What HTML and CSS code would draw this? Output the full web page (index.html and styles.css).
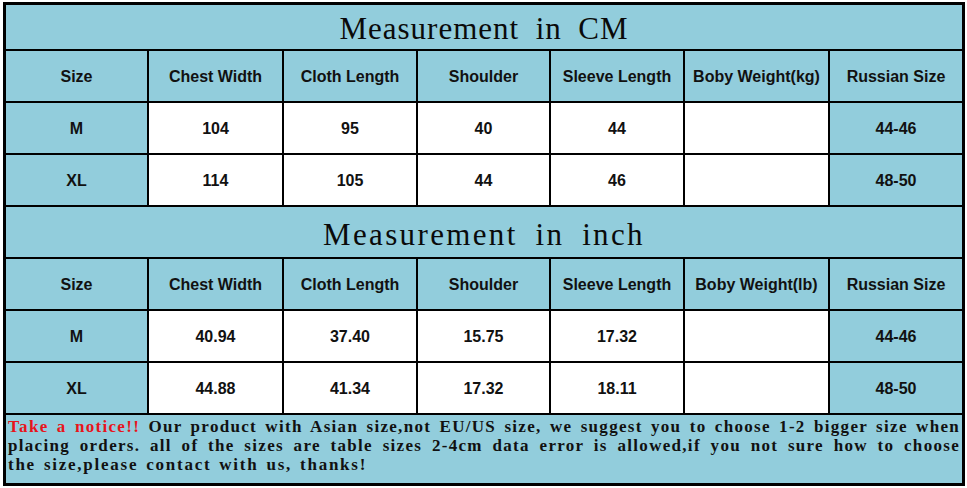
FILE: index.html
```html
<!DOCTYPE html>
<html>
<head>
<meta charset="utf-8">
<link rel="stylesheet" href="styles.css">
</head>
<body>
<div class="chart">
  <div class="title">Measurement in CM</div>

  <div class="c">Size</div>
  <div class="c">Chest Width</div>
  <div class="c">Cloth Length</div>
  <div class="c">Shoulder</div>
  <div class="c">Sleeve Length</div>
  <div class="c">Boby Weight(kg)</div>
  <div class="c">Russian Size</div>

  <div class="c">M</div>
  <div class="c w">104</div>
  <div class="c w">95</div>
  <div class="c w">40</div>
  <div class="c w">44</div>
  <div class="c w"></div>
  <div class="c">44-46</div>

  <div class="c">XL</div>
  <div class="c w">114</div>
  <div class="c w">105</div>
  <div class="c w">44</div>
  <div class="c w">46</div>
  <div class="c w"></div>
  <div class="c">48-50</div>

  <div class="title title-2">Measurement in inch</div>

  <div class="c">Size</div>
  <div class="c">Chest Width</div>
  <div class="c">Cloth Length</div>
  <div class="c">Shoulder</div>
  <div class="c">Sleeve Length</div>
  <div class="c">Boby Weight(lb)</div>
  <div class="c">Russian Size</div>

  <div class="c">M</div>
  <div class="c w">40.94</div>
  <div class="c w">37.40</div>
  <div class="c w">15.75</div>
  <div class="c w">17.32</div>
  <div class="c w"></div>
  <div class="c">44-46</div>

  <div class="c">XL</div>
  <div class="c w">44.88</div>
  <div class="c w">41.34</div>
  <div class="c w">17.32</div>
  <div class="c w">18.11</div>
  <div class="c w"></div>
  <div class="c">48-50</div>

  <div class="notice">
    <p class="just"><span class="red">Take a notice!!</span> Our product with Asian size,not EU/US size, we suggest you to choose 1-2 bigger size when<br>placing orders. all of the sizes are table sizes 2-4cm data error is allowed,if you not sure how to choose</p>
    <p class="last">the size,please contact with us, thanks!</p>
  </div>
</div>
</body>
</html>
```

FILE: styles.css
```css
html, body {
  margin: 0;
  padding: 0;
  background: #ffffff;
}

.chart {
  box-sizing: border-box;
  width: 962px;
  height: 484px;
  margin: 2px 0 0 3px;
  border: 3px solid #000;
  background: #000;
  display: grid;
  grid-template-columns: 141px 133px 132px 131px 132px 143px 132px;
  grid-template-rows: 44px repeat(7, 50px) 68px;
  gap: 2px;
}

.title {
  grid-column: 1 / -1;
  background: #92cddc;
  display: flex;
  align-items: center;
  justify-content: center;
  font-family: "Liberation Serif", "Times New Roman", serif;
  font-size: 31px;
  letter-spacing: 1px;
  word-spacing: 7.75px;
  color: #0a0a0a;
  padding-top: 3px;
}

.title-2 {
  padding-top: 6px;
  letter-spacing: 2.35px;
}

.c {
  background: #92cddc;
  display: flex;
  align-items: center;
  justify-content: center;
  font-family: "Liberation Sans", Arial, sans-serif;
  font-weight: bold;
  font-size: 16px;
  color: #111;
  padding-top: 2px;
}

.w {
  background: #ffffff;
}

.notice {
  grid-column: 1 / -1;
  background: #92cddc;
  font-family: "Liberation Serif", "Times New Roman", serif;
  font-weight: bold;
  font-size: 17px;
  letter-spacing: 1.3px;
  word-spacing: 2px;
  line-height: 19px;
  white-space: nowrap;
  color: #111;
  padding: 2px 0 0 2px;
  overflow: hidden;
}

.notice p {
  margin: 0;
}

.notice .just {
  width: 952px;
  text-align: justify;
  text-align-last: justify;
}

.notice .last {
  letter-spacing: 1.75px;
}

.red {
  color: #e8141b;
}
```
